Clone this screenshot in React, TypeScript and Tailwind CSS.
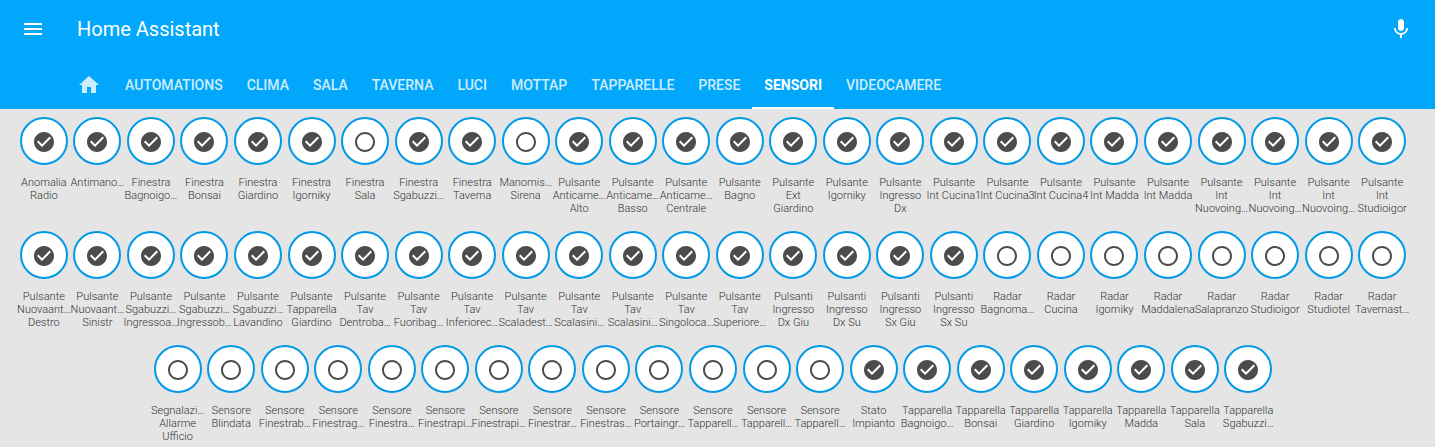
import React from "react";

type Sensor = { lines: string[]; on: boolean };

const parse = (names: string[], on: boolean): Sensor[] =>
  names.map((name) => ({ lines: name.split("|"), on }));

const sensors: Sensor[] = [
  ...parse(
    ["Anomalia|Radio", "Antimano…", "Finestra|Bagnoigo…", "Finestra|Bonsai", "Finestra|Giardino", "Finestra|Igorniky"],
    true,
  ),
  ...parse(["Finestra|Sala"], false),
  ...parse(["Finestra|Sgabuzzi…", "Finestra|Taverna"], true),
  ...parse(["Manomis…|Sirena"], false),
  ...parse(
    [
      "Pulsante|Anticame…|Alto",
      "Pulsante|Anticame…|Basso",
      "Pulsante|Anticame…|Centrale",
      "Pulsante|Bagno",
      "Pulsante|Ext|Giardino",
      "Pulsante|Igorniky",
      "Pulsante|Ingresso|Dx",
      "Pulsante|Int Cucina1",
      "Pulsante|Int Cucina3",
      "Pulsante|Int Cucina4",
      "Pulsante|Int Madda",
      "Pulsante|Int Madda",
      "Pulsante|Int|Nuovoing…",
      "Pulsante|Int|Nuovoing…",
      "Pulsante|Int|Nuovoing…",
      "Pulsante|Int|Studioigor",
      "Pulsante|Nuovaant…|Destro",
      "Pulsante|Nuovaant…|Sinistr",
      "Pulsante|Sgabuzzi…|Ingressoa…",
      "Pulsante|Sgabuzzi…|Ingressob…",
      "Pulsante|Sgabuzzi…|Lavandino",
      "Pulsante|Tapparella|Giardino",
      "Pulsante|Tav|Dentroba…",
      "Pulsante|Tav|Fuoribag…",
      "Pulsante|Tav|Inferiorec…",
      "Pulsante|Tav|Scaladest…",
      "Pulsante|Tav|Scalasini…",
      "Pulsante|Tav|Scalasini…",
      "Pulsante|Tav|Singoloca…",
      "Pulsante|Tav|Superiore…",
      "Pulsanti|Ingresso|Dx Giu",
      "Pulsanti|Ingresso|Dx Su",
      "Pulsanti|Ingresso|Sx Giu",
      "Pulsanti|Ingresso|Sx Su",
    ],
    true,
  ),
  ...parse(
    [
      "Radar|Bagnoma…",
      "Radar|Cucina",
      "Radar|Igorniky",
      "Radar|Maddalena",
      "Radar|Salapranzo",
      "Radar|Studioigor",
      "Radar|Studiotel",
      "Radar|Tavernast…",
      "Segnalazi…|Allarme|Ufficio",
      "Sensore|Blindata",
      "Sensore|Finestrab…",
      "Sensore|Finestrag…",
      "Sensore|Finestra…",
      "Sensore|Finestrapi…",
      "Sensore|Finestrapi…",
      "Sensore|Finestrar…",
      "Sensore|Finestras…",
      "Sensore|Portaingr…",
      "Sensore|Tapparell…",
      "Sensore|Tapparell…",
      "Sensore|Tapparell…",
    ],
    false,
  ),
  ...parse(
    [
      "Stato|Impianto",
      "Tapparella|Bagnoigo…",
      "Tapparella|Bonsai",
      "Tapparella|Giardino",
      "Tapparella|Igorniky",
      "Tapparella|Madda",
      "Tapparella|Sala",
      "Tapparella|Sgabuzzi…",
    ],
    true,
  ),
];

const tabs = ["Automations", "Clima", "Sala", "Taverna", "Luci", "Mottap", "Tapparelle", "Prese", "Sensori", "Videocamere"];

const paths = {
  menu: "M3 18h18v-2H3v2zm0-5h18v-2H3v2zm0-7v2h18V6H3z",
  mic: "M12 14c1.66 0 2.99-1.34 2.99-3L15 5c0-1.66-1.34-3-3-3S9 3.34 9 5v6c0 1.66 1.34 3 3 3zm5.3-3c0 3-2.54 5.1-5.3 5.1S6.7 14 6.7 11H5c0 3.41 2.72 6.23 6 6.72V21h2v-3.28c3.28-.48 6-3.3 6-6.72h-1.7z",
  home: "M10 20v-6h4v6h5v-8h3L12 3 2 12h3v8z",
  on: "M12 2C6.48 2 2 6.48 2 12s4.48 10 10 10 10-4.48 10-10S17.52 2 12 2zm-2 15l-5-5 1.41-1.41L10 14.17l7.59-7.59L19 8l-9 9z",
  off: "M12 2C6.48 2 2 6.48 2 12s4.48 10 10 10 10-4.48 10-10S17.52 2 12 2zm0 18c-4.42 0-8-3.58-8-8s3.58-8 8-8 8 3.58 8 8-3.58 8-8 8z",
};

function Icon({ name }: { name: keyof typeof paths }) {
  return (
    <svg viewBox="0 0 24 24" className="size-6 shrink-0 fill-current" aria-hidden="true">
      <path d={paths[name]} />
    </svg>
  );
}

function Badge({ sensor }: { sensor: Sensor }) {
  return (
    <button type="button" className="flex w-[calc(100%/26)] min-w-[53px] cursor-pointer flex-col items-center gap-[11px]">
      <span className="flex size-12 items-center justify-center rounded-full border-2 border-[#0099e8] bg-white pt-0.5 text-[#4c4c4c]">
        <Icon name={sensor.on ? "on" : "off"} />
      </span>
      <span className="flex h-[39px] flex-col items-center text-[11px] leading-[13px] font-light whitespace-nowrap text-[#333333]">
        {sensor.lines.map((line, i) => (
          <span key={i}>{line}</span>
        ))}
      </span>
    </button>
  );
}

export default function App() {
  return (
    <div className="min-h-screen bg-[#e5e5e5] font-[Roboto,sans-serif] antialiased">
      <header className="bg-[#00a7fa] text-white">
        <div className="flex h-[61px] items-center pr-[22px] pb-[3px] pl-[21px]">
          <button type="button" aria-label="Menu" className="cursor-pointer">
            <Icon name="menu" />
          </button>
          <h1 className="ml-8 flex-1 text-xl font-normal">Home Assistant</h1>
          <button type="button" aria-label="Voice command" className="cursor-pointer">
            <Icon name="mic" />
          </button>
        </div>
        <nav className="flex h-12 pl-[65px] text-sm font-medium uppercase">
          <a href="#home" aria-label="Home" className="flex items-center px-3 opacity-80">
            <Icon name="home" />
          </a>
          {tabs.map((tab) =>
            tab === "Sensori" ? (
              <a key={tab} href="#sensori" aria-current="page" className="flex items-center border-b-2 border-white px-3 pt-0.5 font-bold">
                {tab}
              </a>
            ) : (
              <a key={tab} href={`#${tab.toLowerCase()}`} className="flex items-center px-3 opacity-80">
                {tab}
              </a>
            ),
          )}
        </nav>
      </header>
      <main className="flex flex-wrap justify-center gap-y-4 pt-2 pr-[26px] pl-[17px]">
        {sensors.map((sensor, i) => (
          <Badge key={i} sensor={sensor} />
        ))}
      </main>
    </div>
  );
}
